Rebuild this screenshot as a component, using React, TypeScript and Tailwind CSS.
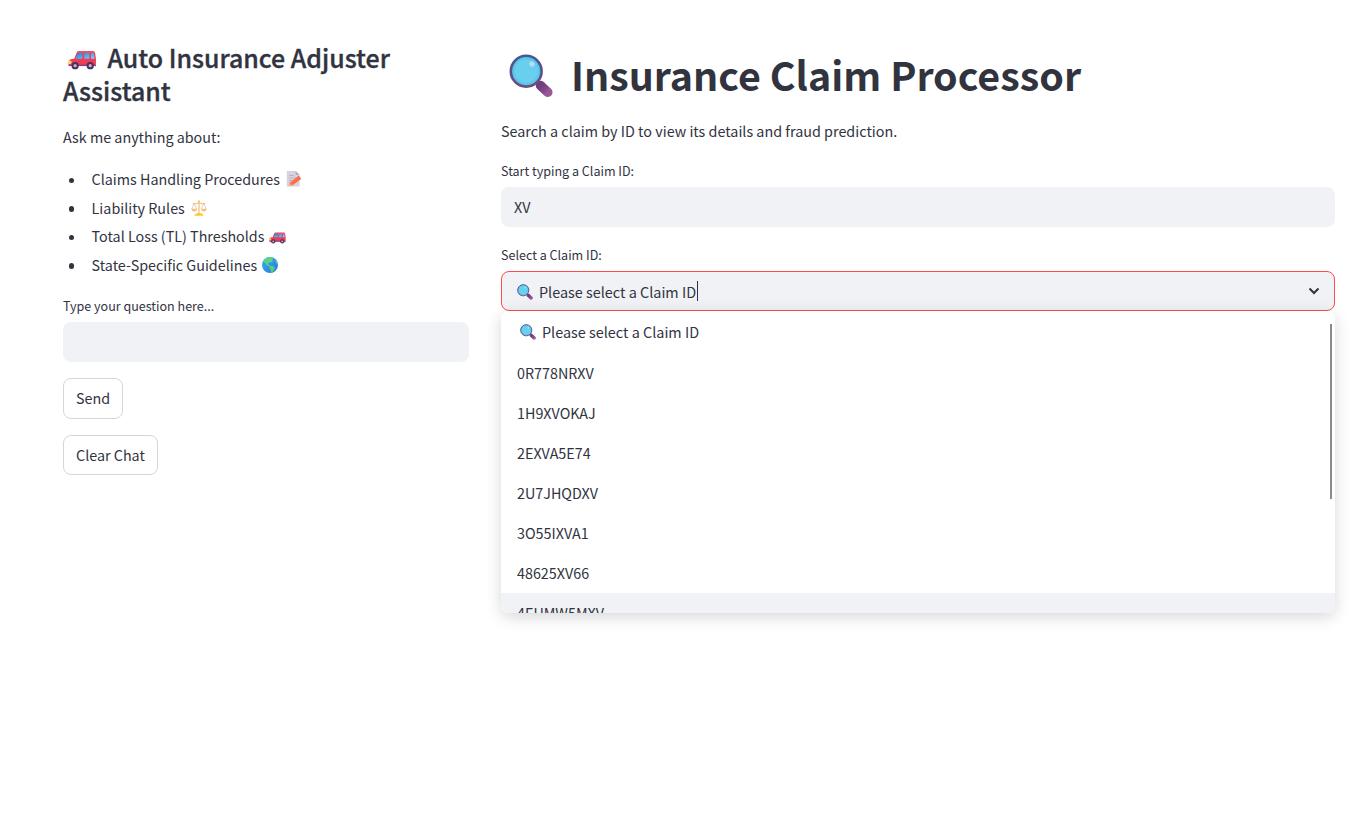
import React from "react";

type IconProps = { className?: string };

function Magnifier({ className }: IconProps) {
  return (
    <svg viewBox="0 0 44 44" className={className}>
      <defs>
        <linearGradient id="handle" x1="0" y1="0" x2="1" y2="1">
          <stop offset="0" stopColor="#6e3f7c" />
          <stop offset="0.5" stopColor="#824488" />
          <stop offset="1" stopColor="#99589a" />
        </linearGradient>
        <linearGradient id="rim" x1="0" y1="0" x2="0" y2="1">
          <stop offset="0" stopColor="#455991" />
          <stop offset="1" stopColor="#704a80" />
        </linearGradient>
        <radialGradient id="lens">
          <stop offset="0.7" stopColor="#68d0ee" />
          <stop offset="1" stopColor="#4cb8df" />
        </radialGradient>
      </defs>
      <path d="M28 28 L32 32" stroke="#60396f" strokeWidth="4" />
      <path d="M31.5 31.5 L38.8 38.3" stroke="url(#handle)" strokeWidth="9.5" strokeLinecap="round" />
      <circle cx="17.2" cy="17.2" r="15.4" fill="url(#lens)" stroke="url(#rim)" strokeWidth="2.6" />
      <ellipse cx="23" cy="10" rx="2.8" ry="2.5" fill="#b5dbf5" transform="rotate(40 23 10)" />
    </svg>
  );
}

function Car({ className }: IconProps) {
  return (
    <svg viewBox="0 0 30 20" className={className}>
      <defs>
        <linearGradient id="glass" x1="0" y1="0" x2="1" y2="1">
          <stop offset="0" stopColor="#1686d8" />
          <stop offset="1" stopColor="#83cfff" />
        </linearGradient>
      </defs>
      <path d="M9.3 1.8 Q10 .4 11.8 .4 H26 Q28 .4 28.5 2.5 L29.4 8.5 V14 Q29.4 16.4 27.5 16.4 H2 Q.6 16.4 .6 14.5 V12 Q.8 9.8 3 9.3 L6.5 8.6 Z" fill="#ef3b56" />
      <path d="M10 1 H27 L27.6 2 H10Z" fill="#f7606b" />
      <path d="M10.5 2.6 H15.2 V8.8 H7.8Z M17 2.6 H22.5 V8.8 H17Z M24.2 2.6 H27 L28.2 8.8 H24.2Z" fill="url(#glass)" />
      <path d="M.6 14.8 H29.4 V16.4 H.6Z" fill="#9b3c70" />
      <path d="M.6 10.5 Q3.9 10.2 3.9 12.6 Q3.6 14.4 .6 14.2Z" fill="#ffe052" />
      <circle cx="7.5" cy="16" r="3.8" fill="#4a315e" />
      <circle cx="7.5" cy="16" r="1.7" fill="#c3b5d1" />
      <circle cx="23.4" cy="16" r="3.8" fill="#4a315e" />
      <circle cx="23.4" cy="16" r="1.7" fill="#c3b5d1" />
    </svg>
  );
}

function Memo({ className }: IconProps) {
  return (
    <svg viewBox="0 0 16 16" className={className}>
      <path d="M.8 0 H9.6 L13.6 4 V15.6 H.8Z" fill="#d8d2e0" />
      <path d="M9.6 0 L13.6 4 H9.6Z" fill="#b3a8bd" />
      <path d="M3 4.5 H8 M3 7 H11 M3 9.5 H9 M3 12 H6" stroke="#b5abc0" strokeWidth=".8" />
      <path d="M2.8 15.2 L3.8 11.8 L11.6 5.6 L14.2 8.8 L6.2 14.6Z" fill="#ff7042" />
      <path d="M11.6 5.6 L12.8 4.8 L15.3 7.9 L14.2 8.8Z" fill="#e65b65" />
      <path d="M2.8 15.2 L3.8 11.8 L6.2 14.6Z" fill="#efb08c" />
    </svg>
  );
}

function Scales({ className }: IconProps) {
  return (
    <svg viewBox="0 0 16 16" className={className}>
      <path d="M3.2 3.5 L.8 9 M3.2 3.5 L5.8 9 M12.8 3.5 L10.2 9 M12.8 3.5 L15.2 9" stroke="#cdbdb8" strokeWidth=".7" fill="none" />
      <path d="M2.2 3.7 Q5 4.2 8 2.8 Q11 4.2 13.8 3.7" stroke="#f3bd68" strokeWidth="1" fill="none" strokeLinecap="round" />
      <path d="M8 1 V14" stroke="#f5bf62" strokeWidth="1.2" />
      <circle cx="8" cy="1.2" r="1" fill="#ffc44a" />
      <path d="M.2 8.8 H6.2 Q5.5 11.6 3.2 11.6 Q.9 11.6 .2 8.8Z M9.8 8.8 H15.8 Q15.1 11.6 12.8 11.6 Q10.5 11.6 9.8 8.8Z" fill="#f8bd78" />
      <path d="M3.4 15.8 Q3.8 13.2 8 13 Q12.2 13.2 12.6 15.8Z" fill="#ffc928" />
    </svg>
  );
}

function Globe({ className }: IconProps) {
  return (
    <svg viewBox="0 0 16 16" className={className}>
      <defs>
        <linearGradient id="sea" x1="0" y1="0" x2="1" y2="1">
          <stop offset="0" stopColor="#35b5ee" />
          <stop offset="1" stopColor="#2874dd" />
        </linearGradient>
      </defs>
      <circle cx="8" cy="8" r="8" fill="url(#sea)" />
      <path d="M2 3 Q4.2 .5 8 .1 L11.5 .9 L10.2 2.8 L11 4.2 L9 5.4 L7.5 5.2 L6 6.5 L6.9 8.1 L8.4 8.9 L7.4 9.6 L5 8.4 L3.6 6.2 L1.7 4.8Z" fill="#5dd285" />
      <path d="M7.8 9.1 L10.3 8.8 L13.2 10.7 L12 13 L10.2 15.3 L8.8 15.8 L9 13 L7.4 11Z" fill="#58cf7d" />
      <path d="M13.2 2.6 Q15.5 5 15.7 7.3 L14 5.8Z" fill="#63d78c" />
    </svg>
  );
}

const topics = [
  { text: "Claims Handling Procedures", icon: <Memo className="ml-[6px] size-4" /> },
  { text: "Liability Rules", icon: <Scales className="ml-[6px] size-4" /> },
  { text: "Total Loss (TL) Thresholds", icon: <Car className="ml-[5px] mt-[3px] h-[12px] w-[17px]" /> },
  { text: "State-Specific Guidelines", icon: <Globe className="ml-[5px] size-4" /> },
];

const claims = ["0R778NRXV", "1H9XVOKAJ", "2EXVA5E74", "2U7JHQDXV", "3O55IXVA1", "48625XV66", "4EUMW5MXV"];

export default function App() {
  return (
    <main className="flex h-[832px] w-[1352px] gap-8 overflow-hidden bg-white pl-[63px] font-['Noto_Sans_CJK_SC','Noto_Sans',sans-serif] text-[14.34px] leading-[26px] text-[#31333f]">
      <section className="w-[406px] shrink-0 pt-[41px]">
        <h2 className="text-[24.95px] font-medium leading-[33px] [-webkit-text-stroke:0.35px_#31333f]">
          <span className="flex items-center">
            <Car className="ml-[5px] mr-[11px] mt-[5px] h-[20px] w-[28.5px]" />
            Auto Insurance Adjuster
          </span>
          Assistant
        </h2>
        <p className="mt-[17px]">Ask me anything about:</p>
        <ul className="mt-[15px]">
          {topics.map((t) => (
            <li key={t.text} className="flex h-[28.6px] items-center">
              <span className="ml-[5.5px] mr-[17.5px] mt-[2px] size-[5.6px] rounded-full bg-[#31333f]" />
              {t.text}
              {t.icon}
            </li>
          ))}
        </ul>
        <label className="mt-[15.6px] block text-[12.54px] leading-[22px]">Type your question here...</label>
        <input className="mt-[4.8px] block h-10 w-full rounded-lg bg-[#f0f2f6] px-3 outline-none" />
        <button className="mt-4 block h-[41px] rounded-lg border border-[#d6d6d9] px-3">Send</button>
        <button className="mt-4 block h-10 rounded-lg border border-[#d6d6d9] px-3">Clear Chat</button>
      </section>

      <section className="w-[834px] shrink-0 pt-[47px]">
        <h1 className="flex h-[53px] items-center text-[39.4px] font-bold leading-[53px]">
          <Magnifier className="ml-2 mr-[18px] mt-1 size-[44px]" />
          Insurance Claim Processor
        </h1>
        <p className="mt-[18px] text-[14.36px]">Search a claim by ID to view its details and fraud prediction.</p>
        <label className="mt-4 block text-[12.54px] leading-[22px]">Start typing a Claim ID:</label>
        <div className="mt-[5px] flex h-10 items-center rounded-lg bg-[#f0f2f6] px-[13px]">XV</div>
        <label className="mt-[17px] block text-[12.54px] leading-[22px]">Select a Claim ID:</label>
        <div className="relative mt-[5px]">
          <div className="flex h-10 items-center rounded-lg border border-[#ff4b4b] bg-[#f0f2f6] pl-[15px] pr-[14px]">
            <Magnifier className="mr-[6px] mt-[2px] size-4" />
            <span className="mt-[2px] text-[14.42px]">Please select a Claim ID</span>
            <span className="ml-px h-5 w-px bg-[#31333f]" />
            <svg viewBox="0 0 12 8" className="ml-auto h-2 w-3">
              <path d="M1.5 1.5 L6 6 L10.5 1.5" fill="none" stroke="#31333f" strokeWidth="2" />
            </svg>
          </div>
          <div className="absolute left-0 top-10 h-[302px] w-full rounded-lg shadow-[0_4px_16px_rgba(0,0,0,0.16)]">
            <ul className="h-full overflow-hidden rounded-lg bg-white pt-[1.4px]">
              <li className="flex h-[40.14px] items-center pl-[19px] text-[14.42px]">
                <Magnifier className="mr-[6px] size-4" />
                Please select a Claim ID
              </li>
              {claims.map((id) => (
                <li key={id} className="flex h-[40.14px] items-center pl-4 last:bg-[#f0f2f6]">
                  {id}
                </li>
              ))}
            </ul>
            <span className="absolute right-[3px] top-[13px] h-[175px] w-[2px] bg-[#8b8b8b]" />
          </div>
        </div>
      </section>
    </main>
  );
}
